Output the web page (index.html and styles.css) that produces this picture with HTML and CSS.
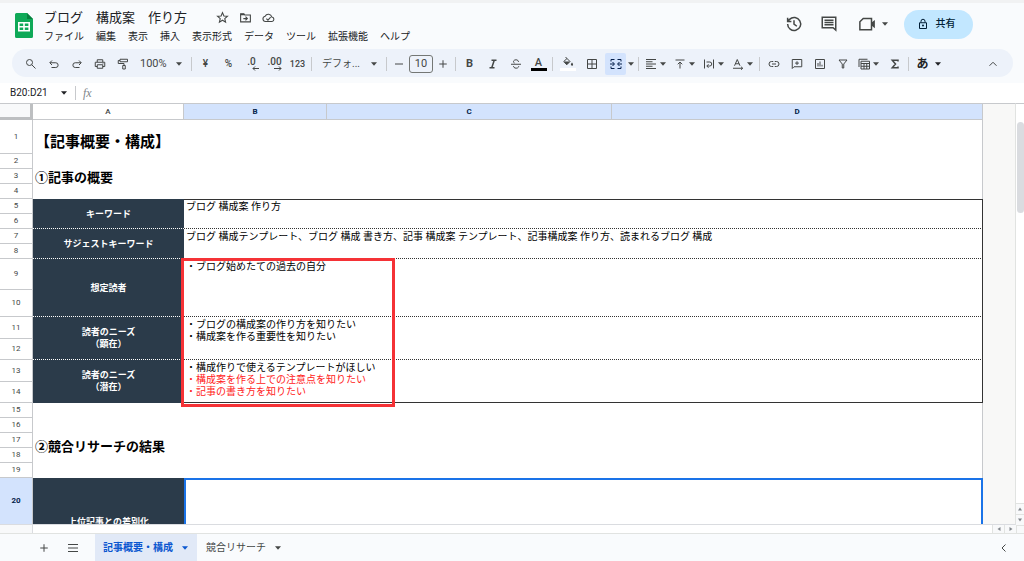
FILE: index.html
```html
<!DOCTYPE html>
<html lang="ja">
<head>
<meta charset="utf-8">
<meta name="viewport" content="width=device-width, initial-scale=1">
<title>ブログ　構成案　作り方</title>
<link rel="stylesheet" href="styles.css">
</head>
<body>
<svg class="defs" aria-hidden="true">
  <symbol id="caret" viewBox="0 0 8 8"><path d="M1 2.2h6L4 5.8z" fill="currentColor"/></symbol>
</svg>
<header class="header">
  <svg class="logo" viewBox="0 0 18 25"><path d="M1.500 0H12l6 6v17.500a1.500 1.500 0 0 1-1.500 1.500h-15A1.500 1.500 0 0 1 0 23.500v-22A1.500 1.500 0 0 1 1.500 0z" fill="#0fa958"/><path d="M12 0l6 6h-6z" fill="#087f3e"/><path d="M3 9h12v9.500H3zM4.600 10.600v2.300h3.600v-2.300zM9.800 10.600v2.300h3.600v-2.300zM4.600 14.500v2.400h3.600v-2.400zM9.800 14.500v2.400h3.600v-2.400z" fill="#fff" fill-rule="evenodd"/></svg>
  <div class="heading">
    <div class="title-row">
      <h1 class="title">ブログ　構成案　作り方</h1>
      <button class="mini" aria-label="スター"><svg class="icon-title" viewBox="0 0 24 24"><path d="M12 3l2.600 6.100 6.600.600-5 4.300 1.500 6.500-5.700-3.500-5.700 3.500 1.500-6.500-5-4.300 6.600-.600z" class="s"/></svg></button>
      <button class="mini" aria-label="移動"><svg class="icon-title" viewBox="0 0 24 24"><path d="M3 5h6l2 2.500h10V20H3z" class="s"/><path d="M3 5h6l2 3H3z" fill="currentColor"/><path d="M8 14h7M12 10.500l3.500 3.500-3.500 3.500" class="s"/></svg></button>
      <button class="mini" aria-label="ドキュメントの状態"><svg class="icon-title" viewBox="0 0 24 24"><path d="M6.500 19.500a5 5 0 0 1-.7-9.900A6.500 6.500 0 0 1 18 11a4.300 4.300 0 0 1 .5 8.500z" class="s"/><path d="M8 14l3 3 5-5.500" class="s"/></svg></button>
    </div>
    <nav class="menus">
      <button>ファイル</button><button>編集</button><button>表示</button><button>挿入</button><button>表示形式</button><button>データ</button><button>ツール</button><button>拡張機能</button><button>ヘルプ</button>
    </nav>
  </div>
  <div class="actions">
    <button class="action" aria-label="変更履歴"><svg class="icon-big" viewBox="0 0 24 24"><path d="M3.500 12a8.700 8.700 0 1 0 2.600-6.200L3.500 8.400M3.500 3.500v5h5M12 7v5.300l3.800 2.700" class="s"/></svg></button>
    <button class="action" aria-label="コメント"><svg class="icon-big" viewBox="0 0 24 24"><path d="M3 3h18v17l-3.500-3H3z" class="s"/><path d="M6 7h12M6 10h12M6 13h12" class="s"/></svg></button>
    <button class="action meet" aria-label="会議"><svg class="icon-big" viewBox="0 0 24 24"><path d="M7 4.500h11v15H2.500V9z" class="s"/><path d="M18 10l4.500-3.500v11L18 14z" fill="currentColor"/></svg><svg class="caret"><use href="#caret"/></svg></button>
    <button class="share"><svg class="icon-tool" viewBox="0 0 24 24"><path d="M5 9.500h14V21H5zM8 9V6.500a4 4 0 0 1 8 0V9" class="s"/><circle cx="12" cy="15.200" r="2" fill="currentColor"/></svg>共有</button>
  </div>
</header>

<div class="toolbar" role="toolbar" aria-label="ツールバー">
  <button class="tool" aria-label="検索"><svg class="icon-tool" viewBox="0 0 24 24"><circle cx="9" cy="9" r="6" class="s"/><path d="M13.500 13.500L21 21" class="s"/></svg></button>
  <button class="tool" aria-label="元に戻す"><svg class="icon-tool" viewBox="0 0 24 24"><path d="M8 5L3.500 9.500 8 14M4 9.500h11.500a4.700 4.700 0 0 1 0 9.500H7" class="s"/></svg></button>
  <button class="tool" aria-label="やり直し"><svg class="icon-tool" viewBox="0 0 24 24"><path d="M16 5l4.500 4.500L16 14M20 9.500H8.500a4.700 4.700 0 0 0 0 9.500H17" class="s"/></svg></button>
  <button class="tool" aria-label="印刷"><svg class="icon-tool" viewBox="0 0 24 24"><path d="M6.500 8V3.500h11V8M6.500 17H2.500V8.500h19V17h-4M6.500 13.500h11v7h-11z" class="s"/><circle cx="18" cy="11.500" r="1" fill="currentColor"/></svg></button>
  <button class="tool" aria-label="書式を貼り付け"><svg class="icon-tool" viewBox="0 0 24 24"><path d="M6 2.500h15v5H6zM6 5H2.500v6H14v4M11.500 15h5v7h-5z" class="s"/></svg></button>
  <label class="drop zoom"><select aria-label="ズーム"><option>100%</option></select><svg class="caret"><use href="#caret"/></svg></label>
  <span class="sep"></span>
  <button class="tool text" aria-label="通貨">¥</button>
  <button class="tool text" aria-label="パーセント">%</button>
  <button class="tool text dec" aria-label="小数点以下を減らす"><span>.0</span><svg class="arrow" viewBox="0 0 8 5"><path d="M8 2.500H2M4 .500l-2 2 2 2" class="t"/></svg></button>
  <button class="tool text dec" aria-label="小数点以下を増やす"><span>.00</span><svg class="arrow" viewBox="0 0 8 5"><path d="M0 2.500h7M5 .500l2 2-2 2" class="t"/></svg></button>
  <button class="tool text small" aria-label="表示形式の詳細">123</button>
  <span class="sep"></span>
  <label class="drop font"><select aria-label="フォント"><option>デフォ...</option></select><svg class="caret"><use href="#caret"/></svg></label>
  <span class="sep"></span>
  <button class="step" aria-label="縮小"><svg class="icon-tool" viewBox="0 0 24 24"><path d="M4 12h16" class="s"/></svg></button>
  <input class="size" aria-label="フォントサイズ" value="10">
  <button class="step" aria-label="拡大"><svg class="icon-tool" viewBox="0 0 24 24"><path d="M4.500 12h15M12 4.500v15" class="s"/></svg></button>
  <span class="sep"></span>
  <button class="tool text bold" aria-label="太字">B</button>
  <button class="tool" aria-label="斜体"><svg class="icon-tool" viewBox="0 0 24 24"><path d="M9 4.500h10M5 19.500h10M14.500 4.500l-5 15" class="b"/></svg></button>
  <button class="tool" aria-label="取り消し線"><svg class="icon-tool" viewBox="0 0 24 24"><path d="M2 12.500h20M17 8c0-6-10-5.500-10-.8 0 1.500.8 2.300 2 2.800M7 16c0 6 10.500 5.500 10.500.5" class="s"/></svg></button>
  <button class="tool text color" aria-label="テキストの色"><span>A</span></button>
  <span class="sep"></span>
  <button class="tool fill" aria-label="塗りつぶしの色"><svg class="icon-tool" viewBox="0 0 24 24"><path d="M7 2l9 9-6.500 6.500L3.500 11 10 5" class="s"/><path d="M4 11h12l-6.500 6.500zM20 13c-4 5-1.500 6.500 0 6.500s4-1.500 0-6.500z" fill="currentColor"/></svg></button>
  <button class="tool" aria-label="枠線"><svg class="icon-tool" viewBox="0 0 24 24"><path d="M3 3h18v18H3zM3 12h18M12 3v18" class="s"/></svg></button>
  <button class="merge" aria-label="セルを結合"><svg class="icon-tool" viewBox="0 0 24 24"><path d="M9 3H2v4M2 17v4h7M15 3h7v4M22 17v4h-7M0 12h8M5 8l4 4-4 4M24 12h-8M19 8l-4 4 4 4" class="m"/></svg></button><button class="more" aria-label="結合の種類"><svg class="caret"><use href="#caret"/></svg></button>
  <span class="sep"></span>
  <button class="split" aria-label="水平方向の配置"><svg class="icon-tool" viewBox="0 0 24 24"><path d="M2 3h20M2 7.500h13M2 12h20M2 16.500h13M2 21h20" class="s"/></svg><svg class="caret"><use href="#caret"/></svg></button>
  <button class="split" aria-label="垂直方向の配置"><svg class="icon-tool" viewBox="0 0 24 24"><path d="M3 4h18M12 21V8M7.500 12.500L12 8l4.500 4.500" class="s"/></svg><svg class="caret"><use href="#caret"/></svg></button>
  <button class="split" aria-label="テキストの折り返し"><svg class="icon-tool" viewBox="0 0 24 24"><path d="M3 3v18M21 3v18M7 8h6.500a3.500 3.500 0 0 1 0 8H8M11 12.500L7.500 16l3.500 3.500" class="s"/></svg><svg class="caret"><use href="#caret"/></svg></button>
  <button class="split" aria-label="テキストの回転"><svg class="icon-tool" viewBox="0 0 24 24"><path d="M5 15.500L10.500 3l5.500 12.500M7 11.500h7M2 20.500h19M18 17.500l3.500 3-3.500 3" class="s"/></svg><svg class="caret"><use href="#caret"/></svg></button>
  <span class="sep"></span>
  <button class="tool" aria-label="リンクを挿入"><svg class="icon-tool" viewBox="0 0 24 24"><path d="M10.500 17H7A5 5 0 0 1 7 7h3.500M13.500 7H17a5 5 0 0 1 0 10h-3.500M8 12h8" class="s"/></svg></button>
  <button class="tool" aria-label="コメントを挿入"><svg class="icon-tool" viewBox="0 0 24 24"><path d="M2.500 21V3h19v14.500H6zM12 6.500v7.500M8.200 10.200h7.600" class="s"/></svg></button>
  <button class="tool" aria-label="グラフを挿入"><svg class="icon-tool" viewBox="0 0 24 24"><path d="M3 3h18v18H3zM8 10v7M12 7v10M16 13.500V17" class="s"/></svg></button>
  <button class="tool" aria-label="フィルタを作成"><svg class="icon-tool" viewBox="0 0 24 24"><path d="M4 4h16l-6.500 8v8h-3v-8z" class="s"/></svg></button>
  <button class="split" aria-label="テーブル表示"><svg class="icon-tool" viewBox="0 0 24 24"><path d="M2 18V2.500h17M6 6.500h17V22H6zM6 11h17M6 16.500h17M12 11v11M17.500 11v11" class="s"/></svg><svg class="caret"><use href="#caret"/></svg></button>
  <button class="tool" aria-label="関数"><svg class="icon-tool" viewBox="0 0 24 24"><path d="M18 7V4.500H6.500L13 12l-6.500 7.500H18V17" class="b"/></svg></button>
  <span class="sep"></span>
  <button class="ime" aria-label="入力ツール">あ<svg class="caret"><use href="#caret"/></svg></button>
  <button class="tool collapse" aria-label="メニューを非表示"><svg class="icon-tool" viewBox="0 0 24 24"><path d="M5 15.500l7-7 7 7" class="s"/></svg></button>
</div>

<div class="formula">
  <input class="namebox" aria-label="名前ボックス" value="B20:D21">
  <svg class="caret"><use href="#caret"/></svg>
  <span class="sep"></span>
  <label class="fx" for="fx">fx</label>
  <input class="fx-input" id="fx">
</div>

<main class="grid">
  <div class="sheet">
    <table class="cells">
      <colgroup><col class="c-n"><col class="c-a"><col class="c-b"><col class="c-c"><col class="c-d"></colgroup>
      <thead><tr><td class="corner"></td><th>A</th><th class="on">B</th><th class="on">C</th><th class="on">D</th></tr></thead>
      <tbody>
        <tr class="h34"><th>1</th><td colspan="4" class="big">【記事概要・構成】</td></tr>
        <tr><th>2</th><td colspan="4" rowspan="3" class="section">①記事の概要</td></tr>
        <tr><th>3</th></tr>
        <tr><th>4</th></tr>
        <tr><th>5</th><td rowspan="2" class="label">キーワード</td><td colspan="3" rowspan="2" class="value first">ブログ 構成案 作り方</td></tr>
        <tr><th>6</th></tr>
        <tr><th>7</th><td rowspan="2" class="label">サジェストキーワード</td><td colspan="3" rowspan="2" class="value">ブログ 構成テンプレート、ブログ 構成 書き方、記事 構成案 テンプレート、記事構成案 作り方、読まれるブログ 構成</td></tr>
        <tr><th>8</th></tr>
        <tr class="h31"><th>9</th><td rowspan="2" class="label">想定読者</td><td colspan="3" rowspan="2" class="value">・ブログ始めたての過去の自分</td></tr>
        <tr class="h27"><th>10</th></tr>
        <tr class="h22"><th>11</th><td rowspan="2" class="label">読者のニーズ<br>（顕在）</td><td colspan="3" rowspan="2" class="value">・ブログの構成案の作り方を知りたい<br>・構成案を作る重要性を知りたい</td></tr>
        <tr class="h21"><th>12</th></tr>
        <tr class="h22"><th>13</th><td rowspan="2" class="label last">読者のニーズ<br>（潜在）</td><td colspan="3" rowspan="2" class="value last">・構成作りで使えるテンプレートがほしい<br><span class="red">・構成案を作る上での注意点を知りたい<br>・記事の書き方を知りたい</span></td></tr>
        <tr class="h21"><th>14</th></tr>
        <tr><th>15</th><td colspan="4" rowspan="2"></td></tr>
        <tr><th>16</th></tr>
        <tr><th>17</th><td colspan="4" rowspan="2" class="section upper">②競合リサーチの結果</td></tr>
        <tr><th>18</th></tr>
        <tr><th>19</th><td colspan="4"></td></tr>
        <tr class="h47"><th class="on">20</th><td rowspan="2" class="label last">上位記事との差別化</td><td colspan="3" rowspan="2" class="selected"></td></tr>
        <tr class="h42"><th class="on"></th></tr>
      </tbody>
    </table>
    <div class="callout"></div>
  </div>
  <div class="vscroll">
    <div class="track"><div class="thumb"></div></div>
    <button aria-label="上へ"><svg class="nib" viewBox="0 0 6 6"><path d="M1 4.500h4L3 1.500z" fill="currentColor"/></svg></button>
    <button aria-label="下へ"><svg class="nib" viewBox="0 0 6 6"><path d="M1 1.500h4L3 4.500z" fill="currentColor"/></svg></button>
  </div>
  <div class="hscroll">
    <div class="hstart"></div>
    <button aria-label="左へ"><svg class="nib" viewBox="0 0 6 6"><path d="M4.500 1v4L1.500 3z" fill="currentColor"/></svg></button>
    <button aria-label="右へ"><svg class="nib" viewBox="0 0 6 6"><path d="M1.500 1v4l3-2z" fill="currentColor"/></svg></button>
  </div>
  <div class="scroll-corner"></div>
</main>

<footer class="tabs">
  <button class="tab-tool" aria-label="シートを追加"><svg class="icon-tool" viewBox="0 0 24 24"><path d="M4.500 12h15M12 4.500v15" class="s"/></svg></button>
  <button class="tab-tool" aria-label="すべてのシート"><svg class="icon-tool" viewBox="0 0 24 24"><path d="M2 5h20M2 12h20M2 19h20" class="s"/></svg></button>
  <button class="tab active">記事概要・構成<svg class="caret"><use href="#caret"/></svg></button>
  <button class="tab">競合リサーチ<svg class="caret"><use href="#caret"/></svg></button>
  <button class="tab-tool side" aria-label="サイドパネルを表示"><svg class="icon-tool" viewBox="0 0 24 24"><path d="M15 5l-7 7 7 7" class="s"/></svg></button>
</footer>
</body>
</html>
```
FILE: styles.css
```css
* { box-sizing: border-box; }

body {
  margin: 0;
  height: 100vh;
  display: flex;
  flex-direction: column;
  overflow: hidden;
  background: #f9fbfd;
  border-top: 3px solid #f1f2f3;
  color: #202124;
  font: 10px/12px Roboto, "Noto Sans CJK JP", sans-serif;
}

button, input, select {
  margin: 0;
  padding: 0;
  border: 0;
  background: none;
  color: inherit;
  font: inherit;
}

button {
  display: flex;
  align-items: center;
  justify-content: center;
  white-space: nowrap;
}

select { appearance: none; }

.defs { display: none; }
.s, .m { fill: none; stroke: currentColor; stroke-width: 2; }
.b { fill: none; stroke: currentColor; stroke-width: 3; }
.t { fill: none; stroke: currentColor; stroke-width: 1; }
.icon-tool { width: 12px; height: 12px; flex: none; }
.icon-title { width: 13px; height: 13px; }
.icon-big { width: 18px; height: 18px; flex: none; }
.caret { width: 8px; height: 8px; flex: none; }

/* Header */
.header {
  flex: none;
  height: 46px;
  display: flex;
  padding: 0 51px 0 15px;
}
.logo { width: 18px; height: 25px; margin-top: 10px; }
.heading { margin-left: 11px; padding-top: 4px; }
.title-row { display: flex; align-items: center; height: 21px; }
.title { margin: 0 24px 0 0; font-size: 13px; font-weight: 400; line-height: 20px; white-space: nowrap; }
.mini { width: 23px; color: #444746; }
.menus { display: flex; gap: 12px; margin-top: 3px; }
.actions { display: flex; align-items: center; margin-left: auto; height: 42px; color: #444746; }
.action { width: 35px; height: 28px; }
.meet { width: 48px; gap: 5px; margin-left: 3px; }
.share {
  width: 69px;
  height: 29px;
  gap: 7px;
  margin-left: 7px;
  padding-right: 5px;
  border-radius: 15px;
  background: #c2e7ff;
  color: #001d35;
  font-weight: 500;
}

/* Toolbar */
.toolbar {
  flex: none;
  display: flex;
  align-items: center;
  height: 28px;
  margin: 0 11px 6px 12px;
  padding: 1px 9px 0 7px;
  border-radius: 14px;
  background: #edf2fa;
  color: #444746;
}
.tool { width: 23px; height: 22px; flex: none; }
.text { font-weight: 500; }
.small { font-size: 9px; }
.sep { width: 1px; height: 14px; margin: 0 2px; background: #c7c9cc; flex: none; }
.drop { display: flex; align-items: center; justify-content: space-between; padding: 0 6px; font-size: 11px; }
.zoom { width: 55px; }
.font { width: 70px; font-size: 10px; padding-left: 8px; }
.dec { flex-direction: column; align-items: center; }
.dec span { line-height: 9px; }
.arrow { width: 8px; height: 5px; align-self: flex-end; margin-right: 4px; }
.step { width: 20px; height: 22px; }
.size {
  width: 24px;
  height: 18px;
  border: 1px solid #747775;
  border-radius: 3px;
  text-align: center;
  font-size: 11px;
}
.bold { font-size: 11px; font-weight: 700; }
.color span { width: 16px; border-bottom: 3px solid #000; font-size: 11px; line-height: 11px; }
.fill { width: 25px; flex-direction: column; }
.fill::after { content: ""; width: 16px; height: 3px; background: #fff; }
.merge { width: 21px; height: 22px; margin-left: 2px; border-radius: 2px; background: #d3e3fd; color: #041e49; }
.more { width: 10px; }
.split { width: 29px; height: 22px; gap: 2px; padding-left: 4px; justify-content: flex-start; }
.ime { gap: 5px; width: 36px; color: #202124; font-size: 12px; font-weight: 700; }
.collapse { margin-left: auto; }

/* Name box and formula input */
.formula {
  flex: none;
  display: flex;
  align-items: center;
  height: 20px;
  padding-left: 10px;
  background: #fff;
  color: #202124;
}
.namebox { width: 50px; }
.formula .sep { margin: 0 7px; }
.fx { color: #80868b; font: italic 12px/14px "Liberation Serif", serif; }
.fx-input { flex: 1; }

/* Spreadsheet */
.grid {
  flex: 1;
  min-height: 0;
  display: grid;
  grid-template-columns: minmax(0, 1fr) 8px;
  grid-template-rows: minmax(0, 1fr) 9px;
}
.sheet { position: relative; overflow: hidden; background: #f8f8f7; border-bottom: 1px solid #dadce0; border-right: 1px solid #e1e3e1; border-top: 1px solid #c7c9cc; }
.cells { table-layout: fixed; width: 983px; border-collapse: separate; border-spacing: 0; background: #fff; }
.c-n { width: 33px; }
.c-a { width: 151px; }
.c-b { width: 143px; }
.c-c { width: 285px; }
.c-d { width: 371px; }
.cells th, .cells td { padding: 0; border: 0 solid #c7c9cc; border-right-width: 1px; }
.cells th { border-bottom-width: 1px; color: #444746; font-size: 8px; line-height: 10px; font-weight: 400; }
.cells thead th, .cells .corner { height: 16px; }
.cells thead th { font-weight: 500; }
.cells .corner { border-width: 0 3px 3px 0; border-color: #bdbfc1; background: #f8f9fa; }
.cells tbody tr { height: 15px; }
.cells tbody .h34 { height: 34px; }
.cells tbody .h31 { height: 31px; }
.cells tbody .h27 { height: 27px; }
.cells tbody .h22 { height: 22px; }
.cells tbody .h21 { height: 21px; }
.cells tbody .h47 { height: 47px; }
.cells tbody .h42 { height: 42px; }
.cells th.on { background: #d3e3fd; color: #041e49; font-weight: 700; }
.cells .big { padding: 10px 0 0 2px; font-size: 15px; line-height: 20px; font-weight: 700; color: #000; }
.cells .section { padding: 2px 0 0 2px; font-size: 13px; line-height: 18px; font-weight: 700; color: #000; }
.cells .upper { padding: 0 0 2px 2px; }
.cells .label {
  border-right: 0;
  border-bottom: 1px dotted #fff;
  background: #2b3b4a;
  color: #fff;
  text-align: center;
  font-size: 9px;
  font-weight: 700;
}
.cells .value {
  padding: 2px 0 0 2px;
  border-right: 1px solid #333;
  border-bottom: 1px dotted #333;
  vertical-align: top;
  color: #000;
  font-size: 10px;
}
.cells .first { box-shadow: inset 0 1px #333; }
.cells .label.last { border-bottom-style: solid; border-bottom-color: #2b3b4a; }
.cells .value.last { border-bottom-style: solid; }
.cells .value .red { color: #f22; }
.cells .selected { border: 2px solid #1a73e8; }
.callout {
  position: absolute;
  left: 181px;
  top: 154px;
  width: 214px;
  height: 149px;
  border: 3px solid #f53236;
}

/* Scroll bars */
.vscroll { display: flex; flex-direction: column; border-top: 1px solid #c7c9cc; background: #fff; color: #80868b; }
.track { flex: 1; padding: 18px 0 0 1px; }
.thumb { height: 91px; border-radius: 4px; background: #dadce0; }
.vscroll button { height: 11px; background: #f8f9fa; border-top: 1px solid #e1e3e1; }
.nib { width: 6px; height: 6px; }
.hscroll { display: flex; background: #fff; color: #80868b; border-bottom: 1px solid #e1e3e1; }
.hstart { width: 33px; margin-right: auto; background: #f8f9fa; border-right: 1px solid #dadce0; }
.hscroll button { width: 12px; background: #f8f9fa; border-left: 1px solid #e1e3e1; }
.scroll-corner { background: #f8f9fa; border: 1px solid #e1e3e1; border-width: 1px 0 1px 1px; }

/* Sheet tabs */
.tabs { flex: none; display: flex; height: 27px; padding: 0 6px 0 29px; color: #444746; }
.tab-tool { width: 29px; }
.tab { gap: 8px; padding: 0 8px; }
.active { margin: 0 1px 0 8px; background: #e1e9f7; color: #0b57d0; font-weight: 700; }
.side { margin-left: auto; }
```
